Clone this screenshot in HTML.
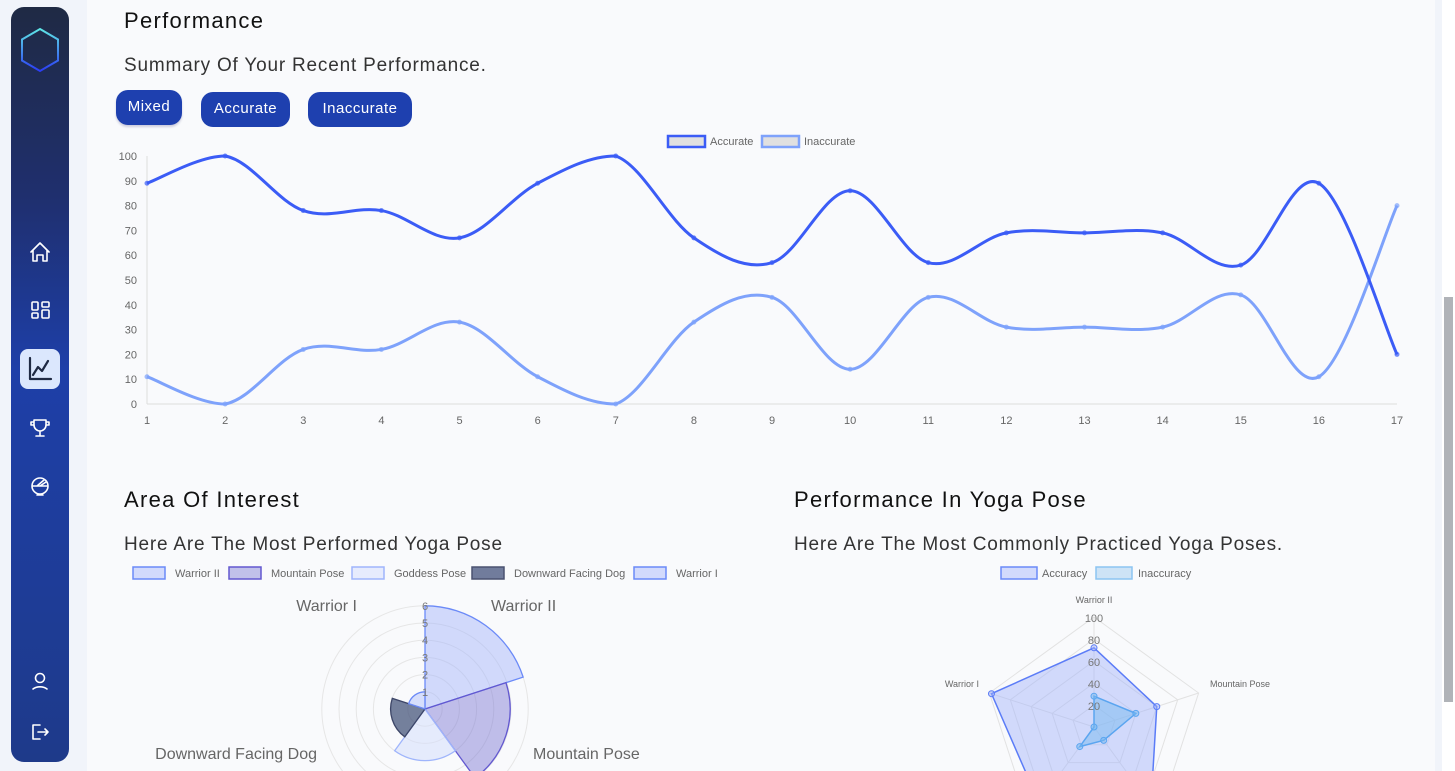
<!DOCTYPE html>
<html><head><meta charset="utf-8"><style>
*{margin:0;padding:0;box-sizing:border-box}
body{width:1455px;height:771px;overflow:hidden;background:#f1f4fa;font-family:"Liberation Sans",sans-serif;position:relative}
#main{position:absolute;left:87px;top:0;width:1348px;height:771px;background:#f9fafc}
#sb{position:absolute;left:11px;top:7px;width:58px;height:755px;border-radius:13px;background:linear-gradient(#1f2a44 0%,#1f2f6e 25%,#1e3fa8 48%,#1e3a8a 100%)}
#scroll{position:absolute;left:1442px;top:0;width:13px;height:771px;background:#fff}
#thumb{position:absolute;left:1444px;top:297px;width:9px;height:405px;background:#b0b3b8}
.t{position:absolute;color:#111;white-space:nowrap}
.h{font-size:22px;letter-spacing:1.3px}
.sub{font-size:19px;color:#333;letter-spacing:0.8px}
.btn{position:absolute;background:#1e40af;color:#fff;font-size:15px;border-radius:12px;text-align:center;letter-spacing:0.5px}
svg{position:absolute;left:0;top:0}
</style></head><body>
<div id="main"></div>
<div id="sb"></div>
<div id="scroll"></div><div id="thumb"></div>
<div class="t h" style="left:124px;top:8px">Performance</div>
<div class="t sub" style="left:124px;top:55px">Summary Of Your Recent Performance.</div>
<div class="btn" style="left:116px;top:90px;width:66px;height:35px;line-height:33px;box-shadow:0 2px 2px #ccd">Mixed</div>
<div class="btn" style="left:201px;top:92px;width:89px;height:35px;line-height:33px">Accurate</div>
<div class="btn" style="left:308px;top:92px;width:104px;height:35px;line-height:33px">Inaccurate</div>
<div class="t h" style="left:124px;top:487px">Area Of Interest</div>
<div class="t sub" style="left:124px;top:534px">Here Are The Most Performed Yoga Pose</div>
<div class="t h" style="left:794px;top:487px">Performance In Yoga Pose</div>
<div class="t sub" style="left:794px;top:534px">Here Are The Most Commonly Practiced Yoga Poses.</div>
<svg id="s" width="1455" height="771" xmlns="http://www.w3.org/2000/svg">
<defs><linearGradient id="hx" x1="0" y1="0" x2="0" y2="1"><stop offset="0" stop-color="#5ee6e6"/><stop offset="1" stop-color="#2b3cf5"/></linearGradient></defs>
<polygon points="40,29 58,39.5 58,60.5 40,71 22,60.5 22,39.5" fill="none" stroke="url(#hx)" stroke-width="2"/>
<g fill="none" stroke="#fff" stroke-width="1.6" stroke-linejoin="round" stroke-linecap="round">
<path d="M31 252 L40 243 L49 252 M33 250 V261 H37 V255 H43 V261 H47 V250"/>
<rect x="32" y="302" width="6" height="8" rx="1"/><rect x="42" y="302" width="7" height="5" rx="1"/><rect x="32" y="313" width="6" height="5" rx="1"/><rect x="42" y="310" width="7" height="8" rx="1"/>
<path d="M34 420 H46 V425 A6 6 0 0 1 34 425 Z M34 422 H31 V425 H34 M46 422 H49 V425 H46 M40 431 V435 M36 436 H44"/>
<path d="M32 486 H48 A8 8 0 0 1 32 486 Z M32 486 A8 8 0 0 1 48 486 M37 486 L44 480 M40 486 L46 482 M37 495 H43"/>
<circle cx="40" cy="678" r="4.5"/><path d="M33 689 A9 6 0 0 1 47 689"/>
<path d="M40 725 H33 V739 H40 M38 732 H48 M45 729 L48 732 L45 735"/>
</g>
<rect x="20" y="349" width="40" height="40" rx="8" fill="#dbe7fd"/>
<path d="M30 358 V379 H51 M33 375 L38 367 L42 371 L48 361" fill="none" stroke="#1f2a44" stroke-width="2.2" stroke-linecap="round" stroke-linejoin="round"/>
<g id="g"></g>
</svg>
<script>
var S=document.getElementById('g'),h='';
function T(x,y,s,t,a,c){h+='<text x="'+x+'" y="'+y+'" font-size="'+s+'" fill="'+(c||'#666')+'" text-anchor="'+(a||'start')+'" font-family="Liberation Sans,sans-serif">'+t+'</text>';}
var x0=147,dx=78.125,yb=404,k=2.48;
h+='<line x1="147" y1="156" x2="147" y2="404" stroke="#ddd"/><line x1="147" y1="404" x2="1397" y2="404" stroke="#ddd"/>';
for(var v=0;v<=100;v+=10)T(137,yb-v*k+4,11,v,'end');
for(var i=1;i<=17;i++)T(x0+(i-1)*dx,424,11,i,'middle');
var A=[89,100,78,78,67,89,100,67,57,86,57,69,69,69,56,89,20];
var B=A.map(function(a){return 100-a});
function path(d){var p=d.map(function(v,i){return[x0+i*dx,yb-v*k]});var s='M'+p[0];
for(var i=0;i<p.length-1;i++){var p0=p[i-1]||p[i],p1=p[i],p2=p[i+1],p3=p[i+2]||p2,t=0.17;
s+=' C'+(p1[0]+(p2[0]-p0[0])*t)+','+Math.min(404,Math.max(156,p1[1]+(p2[1]-p0[1])*t))+' '+(p2[0]-(p3[0]-p1[0])*t)+','+Math.min(404,Math.max(156,p2[1]-(p3[1]-p1[1])*t))+' '+p2;}
return {s:s,p:p};}
[[B,'#7ea2fb'],[A,'#3b5cf6']].forEach(function(o){var r=path(o[0]);h+='<path d="'+r.s+'" fill="none" stroke="'+o[1]+'" stroke-width="3"/>';r.p.forEach(function(q){h+='<circle cx="'+q[0]+'" cy="'+q[1]+'" r="2.5" fill="'+o[1]+'" opacity=".7"/>';});});
h+='<rect x="668" y="136" width="37" height="11" fill="#e0e0e0" stroke="#3b5cf6" stroke-width="2.5"/>';T(710,145,11,'Accurate');
h+='<rect x="762" y="136" width="37" height="11" fill="#e0e0e0" stroke="#7ea2fb" stroke-width="2.5"/>';T(804,145,11,'Inaccurate');
[[133,'Warrior II','#d2dafc','#6b8af8'],[229,'Mountain Pose','#c1c1ea','#6258d0'],[352,'Goddess Pose','#e6ebfd','#9fb5fc'],[472,'Downward Facing Dog','#717c9c','#4a5270'],[634,'Warrior I','#d2dafc','#6b8af8']].forEach(function(l){h+='<rect x="'+l[0]+'" y="567" width="32" height="12" fill="'+l[2]+'" stroke="'+l[3]+'" stroke-width="1.5"/>';T(l[0]+42,577,11,l[1]);});
var cx=425,cy=709,u=17.2;
for(var r=1;r<=6;r++)h+='<circle cx="'+cx+'" cy="'+cy+'" r="'+r*u+'" fill="none" stroke="#e6e6e6"/>';
function sec(a0,a1,r,f,st){var q=Math.PI/180,R=r*u;h+='<path d="M'+cx+','+cy+' L'+(cx+R*Math.cos(a0*q))+','+(cy+R*Math.sin(a0*q))+' A'+R+','+R+' 0 0 1 '+(cx+R*Math.cos(a1*q))+','+(cy+R*Math.sin(a1*q))+' Z" fill="'+f+'" stroke="'+st+'" stroke-width="1.3"/>';}
sec(-90,-18,6,'rgba(160,178,250,.45)','#6b8af8');sec(-18,54,4.95,'rgba(120,115,210,.45)','#6258d0');sec(54,126,3,'rgba(210,220,252,.5)','#9fb5fc');sec(126,198,2,'rgba(60,75,115,.7)','#3d4668');sec(198,270,1,'rgba(190,204,252,.6)','#6b8af8');
for(var r=1;r<=6;r++)T(cx,cy-r*u+4,11,r,'middle','#777');
T(357,611,16,'Warrior I','end','#666');T(491,611,16,'Warrior II','start','#666');T(317,759,16,'Downward Facing Dog','end','#666');T(533,759,16,'Mountain Pose','start','#666');
h+='<rect x="1001" y="567" width="36" height="12" fill="#d2dafc" stroke="#6b8af8" stroke-width="1.5"/>';T(1042,577,11,'Accuracy');
h+='<rect x="1096" y="567" width="36" height="12" fill="#cde3f6" stroke="#8cc4f2" stroke-width="1.5"/>';T(1138,577,11,'Inaccuracy');
var rx=1094,ry=727,ku=1.1;function pt(i,v){var a=(-90+72*i)*Math.PI/180;return[rx+v*ku*Math.cos(a),ry+v*ku*Math.sin(a)];}
for(var v=20;v<=100;v+=20){h+='<polygon points="'+[0,1,2,3,4].map(function(i){return pt(i,v)}).join(' ')+'" fill="none" stroke="#e2e2e2"/>';}
for(var i=0;i<5;i++){var p=pt(i,100);h+='<line x1="'+rx+'" y1="'+ry+'" x2="'+p[0]+'" y2="'+p[1]+'" stroke="#e2e2e2"/>';}
function poly(vals,f,s){var ps=vals.map(function(v,i){return pt(i,v)});h+='<polygon points="'+ps.join(' ')+'" fill="'+f+'" stroke="'+s+'" stroke-width="1.5"/>';ps.forEach(function(q){h+='<circle cx="'+q[0]+'" cy="'+q[1]+'" r="3" fill="'+f+'" stroke="'+s+'"/>';});}
poly([72,60,88,85,98],'rgba(160,178,250,.45)','#5b7cf7');poly([28,40,15,22,0],'rgba(120,185,240,.5)','#5aa5f0');
[20,40,60,80,100].forEach(function(v){T(rx,ry-v*ku+5,11,v,'middle','#777');});
T(1094,603,9,'Warrior II','middle');T(1210,687,9,'Mountain Pose','start');T(979,687,9,'Warrior I','end');
S.innerHTML=h;
</script>
</body></html>
